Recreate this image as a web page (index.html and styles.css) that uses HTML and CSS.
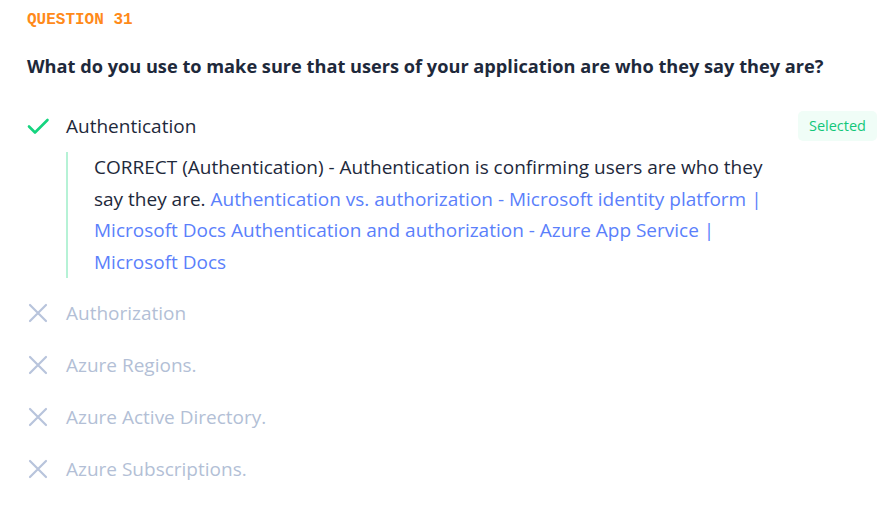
FILE: index.html
```html
<!DOCTYPE html>
<html lang="en">
<head>
<meta charset="utf-8">
<title>Question 31</title>
<link rel="stylesheet" href="styles.css">
</head>
<body>
<main class="quiz">
  <div class="label">QUESTION 31</div>
  <h2 class="question">What do you use to make sure that users of your application are who they say they are?</h2>
  <ul class="options">
    <li class="option correct">
      <div class="option-row">
        <svg class="icon" viewBox="0 0 24 24" width="24" height="24"><path d="M3 12.5l6 6L21.5 6" fill="none" stroke="currentColor" stroke-width="2.6" stroke-linecap="round" stroke-linejoin="round"/></svg>
        <span class="option-text">Authentication</span>
        <span class="badge">Selected</span>
      </div>
      <div class="explanation">
        CORRECT (Authentication) - Authentication is confirming users are who they say they are. <a href="#">Authentication vs. authorization - Microsoft identity platform | Microsoft Docs</a> <a href="#">Authentication and authorization - Azure App Service | Microsoft Docs</a>
      </div>
    </li>
    <li class="option wrong">
      <div class="option-row">
        <svg class="icon" viewBox="0 0 24 24" width="24" height="24"><path d="M4 4l16 16M20 4L4 20" fill="none" stroke="currentColor" stroke-width="2.2" stroke-linecap="round"/></svg>
        <span class="option-text">Authorization</span>
      </div>
    </li>
    <li class="option wrong">
      <div class="option-row">
        <svg class="icon" viewBox="0 0 24 24" width="24" height="24"><path d="M4 4l16 16M20 4L4 20" fill="none" stroke="currentColor" stroke-width="2.2" stroke-linecap="round"/></svg>
        <span class="option-text">Azure Regions.</span>
      </div>
    </li>
    <li class="option wrong">
      <div class="option-row">
        <svg class="icon" viewBox="0 0 24 24" width="24" height="24"><path d="M4 4l16 16M20 4L4 20" fill="none" stroke="currentColor" stroke-width="2.2" stroke-linecap="round"/></svg>
        <span class="option-text">Azure Active Directory.</span>
      </div>
    </li>
    <li class="option wrong">
      <div class="option-row">
        <svg class="icon" viewBox="0 0 24 24" width="24" height="24"><path d="M4 4l16 16M20 4L4 20" fill="none" stroke="currentColor" stroke-width="2.2" stroke-linecap="round"/></svg>
        <span class="option-text">Azure Subscriptions.</span>
      </div>
    </li>
  </ul>
</main>
</body>
</html>
```
FILE: styles.css
```css
* { box-sizing: border-box; }
html, body {
  margin: 0;
  background: #ffffff;
}
body {
  font-family: "Open Sans", "Noto Sans", sans-serif;
  color: #1e293b;
}
.quiz {
  padding: 10px 19px 0 27px;
}
.label {
  font-family: "Liberation Mono", "DejaVu Sans Mono", monospace;
  font-weight: 700;
  font-size: 16px;
  line-height: 20px;
  color: #ff8a1a;
}
.question {
  margin: 22px 0 0;
  font-size: 18.2px;
  line-height: 28px;
  font-weight: 700;
  color: #1e293b;
}
.options {
  list-style: none;
  margin: 20px 0 0;
  padding: 0;
}
.option-row {
  display: flex;
  align-items: center;
  height: 52px;
}
.icon {
  width: 24px;
  height: 24px;
  margin-left: -1px;
  margin-right: 16px;
  flex: none;
}
.option-text {
  font-size: 19px;
  line-height: 28px;
  flex: 1;
}
.correct .icon { color: #15d47f; }
.correct .option-text { color: #1e293b; }
.wrong .icon { color: #b8c4dc; }
.wrong .option-text { color: #b3bfd6; }
.badge {
  background: #f0fdf7;
  color: #12c77a;
  font-size: 14.5px;
  line-height: 30px;
  padding: 0 11px;
  border-radius: 5px;
}
.explanation {
  margin: 0 0 9px 39px;
  border-left: 2px solid #b6f2d6;
  padding: 0 0 0 26px;
  max-width: 712px;
  font-size: 19px;
  line-height: 31.5px;
  color: #1e293b;
}
.explanation a {
  color: #5b7ffb;
  text-decoration: none;
}
```
